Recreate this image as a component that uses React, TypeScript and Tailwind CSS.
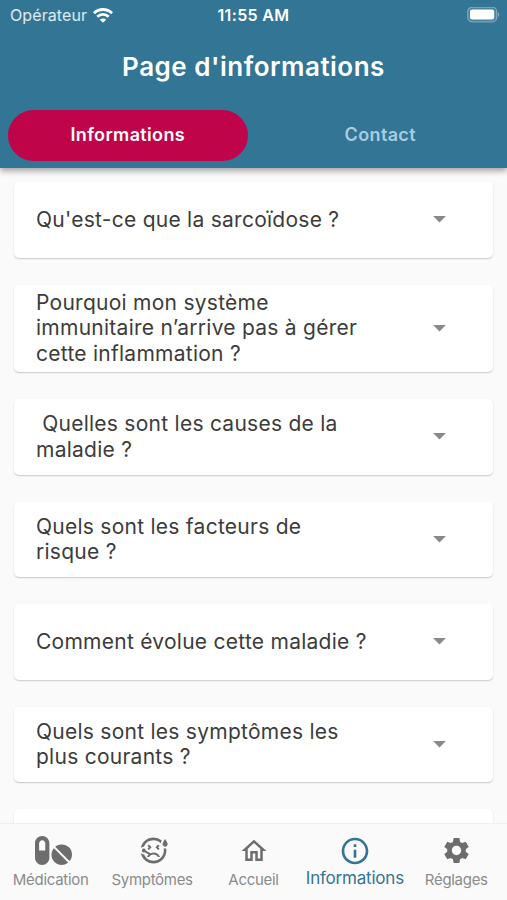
import { useState } from 'react'
import type { ReactNode } from 'react'
import clsx from 'clsx'
import { FaPills } from 'react-icons/fa'
import { MdInfoOutline, MdOutlineHome, MdOutlineSick, MdSettings } from 'react-icons/md'

interface Question {
    lines: string[];
    height: string;
}

interface NavItemProps {
    icon: ReactNode;
    label: string;
    active?: boolean;
}

const questions: Question[] = [
    { lines: ["Qu'est-ce que la sarcoïdose ?"], height: 'h-[75.5px]' },
    { lines: ['Pourquoi mon système', 'immunitaire n’arrive pas à gérer', 'cette inflammation ?'], height: 'h-[87.5px]' },
    { lines: [' Quelles sont les causes de la', 'maladie ?'], height: 'h-[75.5px]' },
    { lines: ['Quels sont les facteurs de', 'risque ?'], height: 'h-[75.5px]' },
    { lines: ['Comment évolue cette maladie ?'], height: 'h-[75.5px]' },
    { lines: ['Quels sont les symptômes les', 'plus courants ?'], height: 'h-[75.5px]' },
    { lines: [], height: 'h-[75.5px]' },
]

function StatusBar() {
    return (
        <div className="grid h-[30px] grid-cols-3 items-center pl-[10px] pr-[7px] text-[16px]">
            <div className="flex items-center gap-[6px] text-white/85">
                <span className="tracking-[0.1px]">Opérateur</span>
                <svg width="20" height="15" viewBox="0 0 20 15" fill="none" stroke="#fff" strokeWidth="2.8">
                    <path d="M1 5.2a12.8 12.8 0 0 1 18 0" />
                    <path d="M4.3 8.8a8.1 8.1 0 0 1 11.4 0" />
                    <path d="M10 14.8 6.9 11.7a4.4 4.4 0 0 1 6.2 0z" fill="#fff" stroke="none" />
                </svg>
            </div>
            <div className="-ml-[3px] text-center font-[560] tracking-[0.35px]">11:55 AM</div>
            <svg className="justify-self-end" width="33" height="16" viewBox="0 0 33 16">
                <rect x="0.7" y="0.2" width="29" height="14.8" rx="4.5" fill="#fff" fillOpacity="0.12" stroke="#fff" strokeOpacity="0.35" strokeWidth="1.2" />
                <rect x="3" y="2.4" width="24.2" height="10" rx="2.2" fill="#fff" />
                <path d="M31 5v5c1.6-.8 1.6-4.2 0-5z" fill="#fff" fillOpacity="0.4" />
            </svg>
        </div>
    )
}

function QuestionCard({ lines, height }: Question) {
    return (
        <button className={clsx('flex w-full shrink-0 items-center justify-between rounded-[5px] bg-white pl-[22px] pr-[47.5px] text-left shadow-[0_1px_1.5px_rgba(0,0,0,0.2)]', height)}>
            <span className="text-[21px] leading-[25.7px] tracking-[0.26px] text-[#3c3c3c]">
                {lines.map((line) => (
                    <span key={line} className="block whitespace-pre">{line}</span>
                ))}
            </span>
            <svg width="13" height="7" viewBox="0 0 13 7" fill="#898989">
                <path d="M0.1 0h12.8L6.5 6.6z" />
            </svg>
        </button>
    )
}

function NavItem({ icon, label, active }: NavItemProps) {
    return (
        <button className={clsx('flex w-[101.4px] flex-col items-center', active ? 'text-[#337594]' : 'text-[#6d6d6d]')}>
            <span className="flex h-[54px] items-center justify-center">{icon}</span>
            <span className={clsx('whitespace-nowrap leading-none', active ? '-mt-[8px] text-[17px] tracking-[-0.2px]' : '-mt-[7px] pt-[1px] text-[15px] tracking-[-0.3px] text-[#8b8b8b]')}>
                {label}
            </span>
        </button>
    )
}

export default function App() {
    const [tab, setTab] = useState('Informations')

    return (
        <div className="flex h-[900px] w-[507px] flex-col overflow-hidden bg-[#fafafa] font-['Inter','Liberation_Sans',sans-serif]">
            <header className="z-10 h-[168px] shrink-0 bg-[#337594] text-white shadow-[0_3px_6px_rgba(0,0,0,0.35)]">
                <StatusBar />
                <h1 className="flex h-[72px] items-center justify-center text-[26px] font-[560] tracking-[0.5px]">Page d'informations</h1>
                <div className="flex px-[8px] pt-[8px]">
                    {['Informations', 'Contact'].map((name) => (
                        <button
                            key={name}
                            onClick={() => setTab(name)}
                            className={clsx('mr-[13px] h-[51px] w-[239.5px] shrink-0 rounded-full pb-[3px] text-[18px] font-semibold tracking-[0.35px]', tab === name ? 'bg-[#bf0449] text-white' : 'text-[#a9cde0]')}
                        >
                            {name}
                        </button>
                    ))}
                </div>
            </header>

            <main className="flex min-h-0 flex-1 flex-col gap-[27px] overflow-hidden px-[14px] pt-[14px]">
                {questions.map((question, i) => (
                    <QuestionCard key={i} {...question} />
                ))}
            </main>

            <nav className="z-10 flex h-[77px] shrink-0 border-t border-[#efefef] bg-[#fafafa]">
                <NavItem icon={<FaPills className="-mt-[2px] ml-[6px]" size={37} />} label="Médication" />
                <NavItem icon={<MdOutlineSick className="-mt-[1px] ml-[2px]" size={31} />} label="Symptômes" />
                <NavItem icon={<MdOutlineHome className="-mt-[1px] ml-[1px]" size={30} />} label="Accueil" />
                <NavItem icon={<MdInfoOutline size={32} />} label="Informations" active />
                <NavItem icon={<MdSettings className="-mt-[1px]" size={31} />} label="Réglages" />
            </nav>
        </div>
    )
}
